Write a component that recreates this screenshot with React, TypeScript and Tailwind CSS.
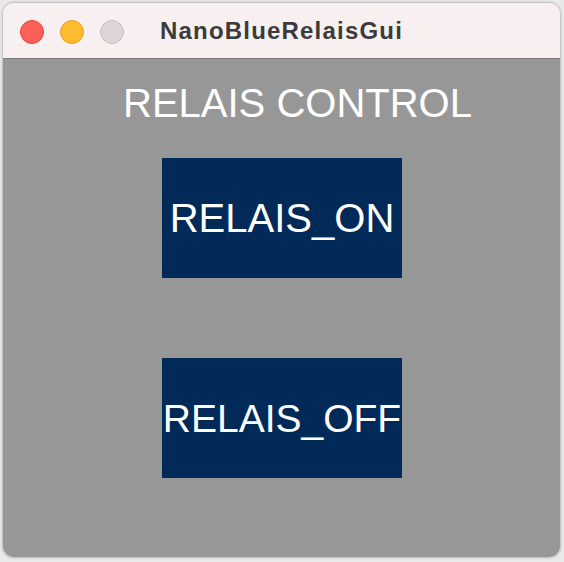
export default function App() {
  return (
    <div className="h-[562px] w-[564px] bg-[#e9e9e9] pl-[2px] pt-[2px] font-['Liberation_Sans',Arial,sans-serif]">
      <div className="flex h-[556px] w-[559px] flex-col overflow-hidden rounded-[12px] border border-[#c9c4c4] shadow-[0_0_2px_rgba(0,0,0,0.25)]">
        {/* title bar */}
        <div className="relative flex h-[55px] shrink-0 items-center justify-center bg-[#f8f0f0]">
          <div className="absolute left-[17px] top-[17px] flex gap-[16px]">
            <span className="h-[24px] w-[24px] rounded-full border border-[#e2463f] bg-[#fe5f57]" />
            <span className="h-[24px] w-[24px] rounded-full border border-[#e1a325] bg-[#febc2e]" />
            <span className="h-[24px] w-[24px] rounded-full border border-[#c8c0c0] bg-[#ddd6d6]" />
          </div>
          <span className="text-[24px] font-bold tracking-[1.2px] text-[#3b3b3b]">NanoBlueRelaisGui</span>
        </div>
        {/* content */}
        <div className="flex flex-1 flex-col border-t border-[#7c7c7c] bg-[#979797]">
          <h1 className="mt-[24px] pl-[120px] text-[40px] leading-none text-white">RELAIS CONTROL</h1>
          <div className="mt-[35px] flex flex-col items-center gap-[80px] pl-[1px]">
            <button className="flex h-[120px] w-[240px] items-center justify-center bg-[#012a58] text-[40px] leading-none text-white">
              RELAIS_ON
            </button>
            <button className="flex h-[120px] w-[240px] items-center justify-center whitespace-nowrap bg-[#012a58] text-[39px] leading-none text-white">
              RELAIS_OFF
            </button>
          </div>
        </div>
      </div>
    </div>
  );
}
